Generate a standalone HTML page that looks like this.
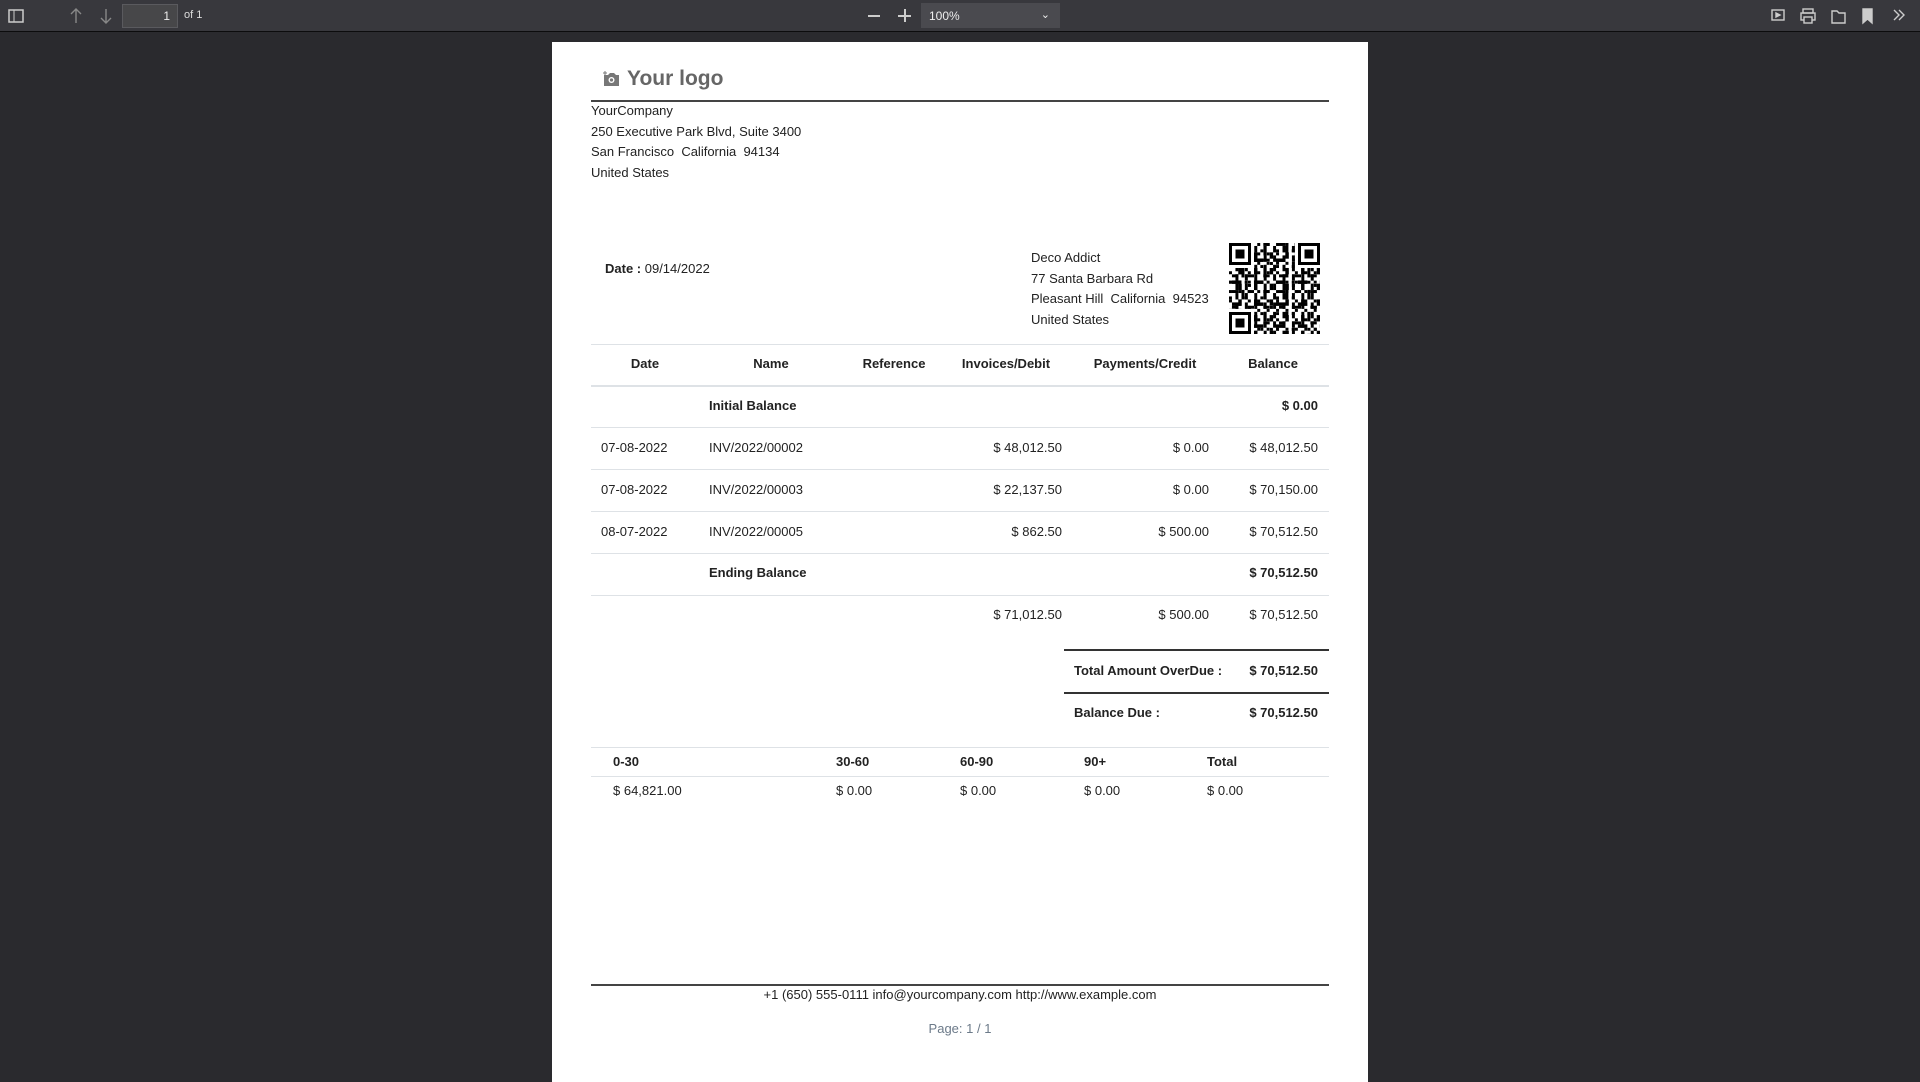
<!DOCTYPE html>
<html><head><meta charset="utf-8"><style>
*{margin:0;padding:0;box-sizing:border-box}
body{width:1920px;height:1080px;background:#2a2a2e;position:relative;overflow:hidden;font-family:"Liberation Sans",sans-serif}
.tb{position:absolute;left:0;top:0;width:1920px;height:32px;background:#38383d;border-bottom:1px solid #0c0c0d}
.a{position:absolute;white-space:nowrap}
.page{position:absolute;left:552px;top:42px;width:816px;height:1040px;background:#fff}
.t{position:absolute;white-space:nowrap;font-size:13px;color:#222}
.b{font-weight:bold}
.r{text-align:right}
.hl{position:absolute;height:1px;background:#dee2e6}
</style></head><body>
<div class="tb">
 <svg class="a" style="left:8px;top:8px" width="16" height="16"><rect x="1" y="2" width="14" height="12" fill="none" stroke="#ccc" stroke-width="1.5"/><line x1="6" y1="2" x2="6" y2="14" stroke="#ccc"/></svg>
 <svg class="a" style="left:68px;top:7px" width="16" height="18"><path d="M8 16V2M3 7l5-5 5 5" fill="none" stroke="#888" stroke-width="1.4"/></svg>
 <svg class="a" style="left:98px;top:7px" width="16" height="18"><path d="M8 2v14M3 11l5 5 5-5" fill="none" stroke="#888" stroke-width="1.4"/></svg>
 <div class="a" style="left:122px;top:4px;width:56px;height:24px;background:#474749;border:1px solid #5a5a5e;color:#eee;font-size:12px;text-align:right;padding:4px 7px 0 0">1</div>
 <div class="a" style="left:184px;top:9px;color:#ddd;font-size:11px">of 1</div>
 <div class="a" style="left:868px;top:15px;width:12px;height:1.5px;background:#ccc"></div>
 <div class="a" style="left:898px;top:15px;width:13px;height:1.5px;background:#ccc"></div>
 <div class="a" style="left:904px;top:9px;width:1.5px;height:13px;background:#ccc"></div>
 <div class="a" style="left:921px;top:3px;width:139px;height:25px;background:#4a4a4f;color:#eee;font-size:12px;padding:6px 0 0 8px">100%<span style="position:absolute;right:10px;top:5px;font-size:11px">&#8964;</span></div>
 <svg class="a" style="left:1770px;top:7px" width="150" height="18" fill="none" stroke="#ccc" stroke-width="1.4">
  <rect x="2" y="3" width="12" height="10"/><path d="M6 6l4 2-4 2z" fill="#ccc"/>
  <rect x="33" y="2" width="10" height="4"/><rect x="31" y="6" width="14" height="7"/><rect x="34" y="10" width="8" height="6" fill="#38383d"/>
  <path d="M62 4h5l2 2h6v10h-13z"/>
  <path d="M93 2h9v14l-4.5-4-4.5 4z" fill="#ccc"/>
  <path d="M124 3l5 5-5 5M129 3l5 5-5 5"/>
 </svg>
</div>
<div class="page">
 <svg class="t" style="left:50px;top:29px" width="18" height="16"><path d="M2 4h4l2-2h4l2 2h3v11H2z" fill="#777"/><circle cx="9.5" cy="9" r="3" fill="#fff"/><circle cx="9.5" cy="9" r="1.6" fill="#777"/><path d="M3 0v4M1 2h4" stroke="#777"/></svg>
 <div class="t b" style="left:75px;top:25px;font-size:21px;color:#666">Your logo</div>
 <div class="a" style="left:39px;top:58px;width:738px;height:1.5px;background:#444"></div>
 <div class="t" style="left:39px;top:59px;line-height:20.5px">YourCompany<br>250 Executive Park Blvd, Suite 3400<br>San Francisco&nbsp; California&nbsp; 94134<br>United States</div>
 <div class="t" style="left:53px;top:219px"><b>Date :</b> 09/14/2022</div>
 <div class="t" style="left:479px;top:206px;line-height:20.5px">Deco Addict<br>77 Santa Barbara Rd<br>Pleasant Hill&nbsp; California&nbsp; 94523<br>United States</div>
 <svg class="a" style="left:677px;top:201px" width="91" height="91" viewBox="0 0 29 29" shape-rendering="crispEdges">
  <defs>
   <pattern id="p1" width="3" height="3" patternUnits="userSpaceOnUse"><rect width="1" height="1"/><rect x="2" y="1" width="1" height="2"/></pattern>
   <pattern id="p2" width="5" height="5" patternUnits="userSpaceOnUse"><rect x="1" y="0" width="2" height="1"/><rect x="3" y="3" width="1" height="2"/><rect x="0" y="2" width="1" height="1"/></pattern>
   <pattern id="p3" width="7" height="7" patternUnits="userSpaceOnUse"><rect x="4" y="1" width="1" height="3"/><rect x="1" y="5" width="3" height="1"/><rect x="6" y="6" width="1" height="1"/></pattern>
  </defs>
  <rect width="29" height="29" fill="url(#p1)"/><rect width="29" height="29" fill="url(#p2)"/><rect width="29" height="29" fill="url(#p3)"/>
  <g><rect x="0" y="0" width="8" height="8" fill="#fff"/><rect x="21" y="0" width="8" height="8" fill="#fff"/><rect x="0" y="21" width="8" height="8" fill="#fff"/>
  <path d="M0 0h7v7h-7zM1 1v5h5v-5zM2 2h3v3h-3zM22 0h7v7h-7zM23 1v5h5v-5zM24 2h3v3h-3zM0 22h7v7h-7zM1 23v5h5v-5zM2 24h3v3h-3z" fill-rule="evenodd"/></g>
 </svg>
 <div class="hl" style="left:39px;top:302px;width:738px"></div>
 <div class="t b" style="left:39px;top:314px;width:108px;text-align:center">Date</div>
 <div class="t b" style="left:169px;top:314px;width:100px;text-align:center">Name</div>
 <div class="t b" style="left:292px;top:314px;width:100px;text-align:center">Reference</div>
 <div class="t b" style="left:384px;top:314px;width:140px;text-align:center">Invoices/Debit</div>
 <div class="t b" style="left:513px;top:314px;width:160px;text-align:center">Payments/Credit</div>
 <div class="t b" style="left:686px;top:314px;width:70px;text-align:center">Balance</div>
 <div class="a" style="left:39px;top:343px;width:738px;height:2px;background:#dee2e6"></div>
 <div class="t b" style="left:157px;top:356px">Initial Balance</div>
 <div class="t b r" style="left:600px;top:356px;width:166px">$ 0.00</div>
 <div class="hl" style="left:39px;top:385px;width:738px"></div>
 <div class="t" style="left:49px;top:398px">07-08-2022</div><div class="t" style="left:157px;top:398px">INV/2022/00002</div>
 <div class="t r" style="left:410px;top:398px;width:100px">$ 48,012.50</div><div class="t r" style="left:557px;top:398px;width:100px">$ 0.00</div><div class="t r" style="left:666px;top:398px;width:100px">$ 48,012.50</div>
 <div class="hl" style="left:39px;top:427px;width:738px"></div>
 <div class="t" style="left:49px;top:440px">07-08-2022</div><div class="t" style="left:157px;top:440px">INV/2022/00003</div>
 <div class="t r" style="left:410px;top:440px;width:100px">$ 22,137.50</div><div class="t r" style="left:557px;top:440px;width:100px">$ 0.00</div><div class="t r" style="left:666px;top:440px;width:100px">$ 70,150.00</div>
 <div class="hl" style="left:39px;top:469px;width:738px"></div>
 <div class="t" style="left:49px;top:482px">08-07-2022</div><div class="t" style="left:157px;top:482px">INV/2022/00005</div>
 <div class="t r" style="left:410px;top:482px;width:100px">$ 862.50</div><div class="t r" style="left:557px;top:482px;width:100px">$ 500.00</div><div class="t r" style="left:666px;top:482px;width:100px">$ 70,512.50</div>
 <div class="hl" style="left:39px;top:511px;width:738px"></div>
 <div class="t b" style="left:157px;top:523px">Ending Balance</div>
 <div class="t b r" style="left:600px;top:523px;width:166px">$ 70,512.50</div>
 <div class="hl" style="left:39px;top:553px;width:738px"></div>
 <div class="t r" style="left:410px;top:565px;width:100px">$ 71,012.50</div><div class="t r" style="left:557px;top:565px;width:100px">$ 500.00</div><div class="t r" style="left:666px;top:565px;width:100px">$ 70,512.50</div>
 <div class="a" style="left:512px;top:607px;width:265px;height:1.5px;background:#333"></div>
 <div class="t b" style="left:522px;top:621px">Total Amount OverDue :</div><div class="t b r" style="left:666px;top:621px;width:100px">$ 70,512.50</div>
 <div class="a" style="left:512px;top:650px;width:265px;height:1.5px;background:#333"></div>
 <div class="t b" style="left:522px;top:663px">Balance Due :</div><div class="t b r" style="left:666px;top:663px;width:100px">$ 70,512.50</div>
 <div class="hl" style="left:39px;top:705px;width:738px"></div>
 <div class="t b" style="left:61px;top:712px">0-30</div><div class="t b" style="left:284px;top:712px">30-60</div><div class="t b" style="left:408px;top:712px">60-90</div><div class="t b" style="left:532px;top:712px">90+</div><div class="t b" style="left:655px;top:712px">Total</div>
 <div class="hl" style="left:39px;top:734px;width:738px"></div>
 <div class="t" style="left:61px;top:741px">$ 64,821.00</div><div class="t" style="left:284px;top:741px">$ 0.00</div><div class="t" style="left:408px;top:741px">$ 0.00</div><div class="t" style="left:532px;top:741px">$ 0.00</div><div class="t" style="left:655px;top:741px">$ 0.00</div>
 <div class="a" style="left:39px;top:942px;width:738px;height:1.5px;background:#444"></div>
 <div class="t" style="left:39px;top:945px;width:738px;text-align:center">+1 (650) 555-0111 info@yourcompany.com http://www.example.com</div>
 <div class="t" style="left:39px;top:979px;width:738px;text-align:center;color:#6c7a89">Page: 1 / 1</div>
</div>
</body></html>
